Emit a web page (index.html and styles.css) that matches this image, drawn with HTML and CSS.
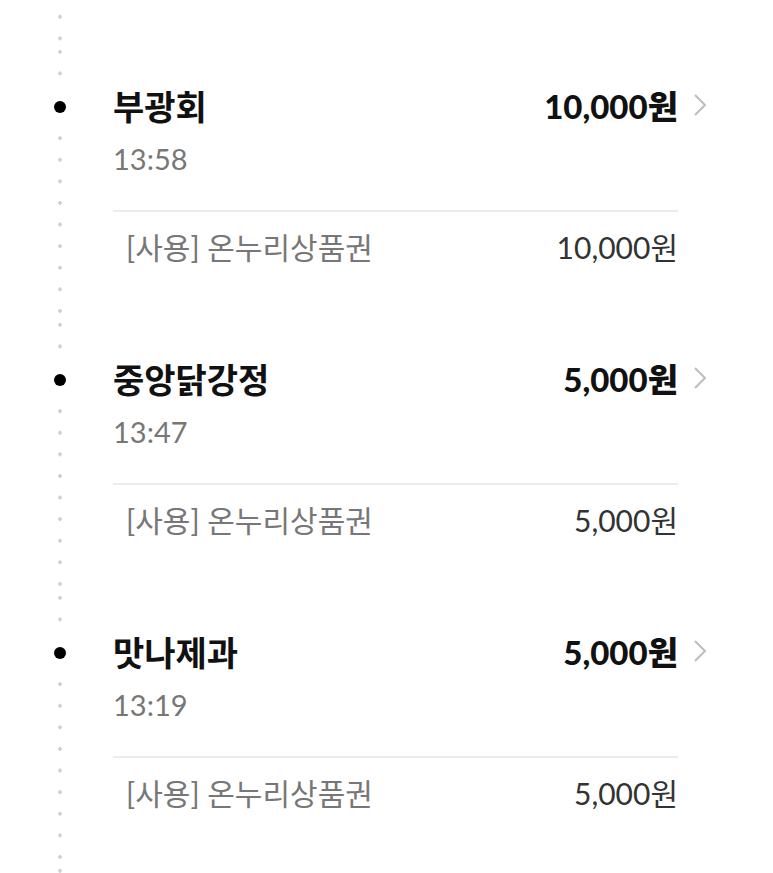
FILE: index.html
```html
<!DOCTYPE html>
<html lang="ko">
<head>
    <meta charset="UTF-8">
    <meta name="viewport" content="width=device-width, initial-scale=1.0">
    <title>사용 내역</title>
    <link rel="stylesheet" href="styles.css">
</head>
<body>
    <div class="history">
        <div class="tail tail-top"><div class="rail"></div></div>

        <div class="item">
            <div class="rail"><div class="marker"></div></div>
            <div class="content">
                <div class="head">
                    <div class="shop">부광회</div>
                    <div class="total">10,000원</div>
                    <svg class="chevron" viewBox="0 0 14 24" width="14" height="24"><polyline points="2,2 12,12 2,22" fill="none" stroke="#bdbdbd" stroke-width="2"/></svg>
                </div>
                <div class="time">13:58</div>
                <div class="detail">
                    <div class="label">[사용] 온누리상품권</div>
                    <div class="amount">10,000원</div>
                </div>
            </div>
        </div>

        <div class="item">
            <div class="rail"><div class="marker"></div></div>
            <div class="content">
                <div class="head">
                    <div class="shop">중앙닭강정</div>
                    <div class="total">5,000원</div>
                    <svg class="chevron" viewBox="0 0 14 24" width="14" height="24"><polyline points="2,2 12,12 2,22" fill="none" stroke="#bdbdbd" stroke-width="2"/></svg>
                </div>
                <div class="time">13:47</div>
                <div class="detail">
                    <div class="label">[사용] 온누리상품권</div>
                    <div class="amount">5,000원</div>
                </div>
            </div>
        </div>

        <div class="item">
            <div class="rail"><div class="marker"></div></div>
            <div class="content">
                <div class="head">
                    <div class="shop">맛나제과</div>
                    <div class="total">5,000원</div>
                    <svg class="chevron" viewBox="0 0 14 24" width="14" height="24"><polyline points="2,2 12,12 2,22" fill="none" stroke="#bdbdbd" stroke-width="2"/></svg>
                </div>
                <div class="time">13:19</div>
                <div class="detail">
                    <div class="label">[사용] 온누리상품권</div>
                    <div class="amount">5,000원</div>
                </div>
            </div>
        </div>

        <div class="tail"><div class="rail"></div></div>
    </div>
</body>
</html>
```

FILE: styles.css
```css
body {
    margin: 0;
    padding: 0;
    background-color: #ffffff;
    font-family: Lato, "Noto Sans CJK KR", sans-serif;
    color: #111;
}
.history {
    padding-left: 50px;
}
.item, .tail {
    display: flex;
    height: 273px;
}
.tail {
    height: 45px;
}
.rail {
    width: 20px;
    flex-shrink: 0;
    background-image: radial-gradient(circle, #d0d0d0 1.5px, transparent 2.2px);
    background-size: 20px 21.6px;
    background-repeat: repeat-y;
    background-position: 0 -4px;
}
.tail-top .rail {
    background-position: 0 6px;
}
.marker {
    margin-top: 40px;
    height: 44px;
    background: #ffffff;
    display: flex;
    align-items: center;
    justify-content: center;
}
.marker::after {
    content: "";
    width: 12px;
    height: 12px;
    border-radius: 50%;
    background: #000;
}
.content {
    width: 565px;
    margin-left: 43px;
}
.head {
    display: flex;
    align-items: center;
    margin-top: 39px;
    height: 42px;
}
.shop {
    flex: 1;
    font-size: 34px;
    font-weight: bold;
    color: #111;
}
.total {
    font-size: 33px;
    font-weight: 900;
    color: #111;
}
.chevron {
    margin-left: 15px;
    margin-right: -29px;
    flex-shrink: 0;
}
.time {
    margin-top: 15px;
    line-height: 36px;
    font-size: 29px;
    color: #777;
}
.detail {
    display: flex;
    justify-content: space-between;
    align-items: center;
    margin-top: 33px;
    padding-top: 17px;
    border-top: 2px solid #ececec;
    line-height: 36px;
    font-size: 30px;
}
.label {
    padding-left: 13px;
    color: #777;
}
.amount {
    color: #333;
}
```
